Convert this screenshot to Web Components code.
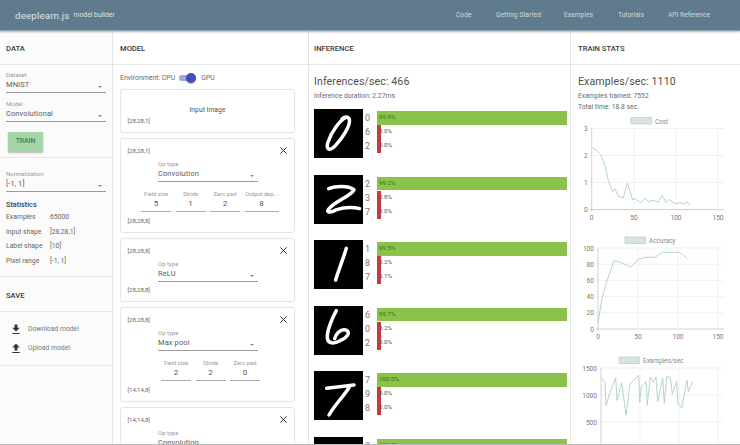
<!DOCTYPE html>
<html><head><meta charset="utf-8">
<style>
html,body{margin:0;padding:0;width:740px;height:445px;overflow:hidden;background:#fff;font-family:Roboto,"Liberation Sans",sans-serif;color:#555}
#app{display:flex;flex-direction:column;width:740px;height:445px;overflow:hidden}
#cols{display:grid;grid-template-columns:113px 196px 262px 169px;flex:1;min-height:0;border-bottom:1px solid #b9bdb9}
</style></head><body>
<div id="app">
<x-header></x-header>
<div id="cols">
<x-panel title="DATA" tint>
  <x-section pad="6px 6px 0" h="93">
    <x-select label="Dataset" value="MNIST"></x-select>
    <x-select label="Model" value="Convolutional" style="margin-top:7px"></x-select>
    <x-button style="margin:10px 0 0 2px">TRAIN</x-button>
  </x-section>
  <x-section pad="12px 6px 0" h="119" >
    <x-select label="Normalization" value="[-1, 1]"></x-select>
    <x-stats style="margin-top:8px"></x-stats>
  </x-section>
  <x-section pad="3px 0 0" h="35"><x-title>SAVE</x-title></x-section>
  <x-section pad="7.5px 0 0 12px" h="54" >
    <x-action kind="down">Download model</x-action>
    <x-action kind="up">Upload model</x-action>
  </x-section>
</x-panel>
<x-panel title="MODEL">
  <x-env></x-env>
  <x-card style="height:44px" bottom="[28,28,1]" plain>Input Image</x-card>
  <x-card style="height:95px" top="[28,28,1]" bottom="[28,28,8]" op="Convolution" fields="Field size:5,Stride:1,Zero pad:2,Output dep...:8"></x-card>
  <x-card style="height:64px" top="[28,28,8]" bottom="[28,28,8]" op="ReLU"></x-card>
  <x-card style="height:95px" top="[28,28,8]" bottom="[14,14,8]" op="Max pool" fields="Field size:2,Stride:2,Zero pad:0"></x-card>
  <x-card style="height:95px" top="[14,14,8]" bottom="" op="Convolution"></x-card>
</x-panel>
<x-panel title="INFERENCE">
  <x-heading big="Inferences/sec: 466" lines="Inference duration: 2.27ms"></x-heading>
  <x-infer digit="M97 25C80 30 52 68 41 102C36 124 50 126 64 110C86 86 110 50 106 31C103 21 90 22 84 30" labels="0,6,2" values="99.9%,0.0%,0.0%" style="margin-top:7.5px"></x-infer>
  <x-infer digit="M44 41C62 34 100 30 120 44C112 62 70 76 50 96C32 112 44 116 68 104C92 96 118 96 137 101" labels="2,3,7" values="99.2%,0.8%,0.0%"></x-infer>
  <x-infer digit="M97 25C88 55 74 90 65 120" labels="1,8,7" values="99.5%,0.2%,0.1%"></x-infer>
  <x-infer digit="M67 14C55 35 38 75 40 96C42 114 60 114 78 104C100 94 112 78 95 72C78 68 65 85 62 98" labels="6,0,2" values="99.7%,0.2%,0.0%"></x-infer>
  <x-infer digit="M38 52L70 48L120 42M105 50C85 80 60 105 45 132" labels="7,9,8" values="100.0%,0.0%,0.0%"></x-infer>
  <x-infer digit="M60 60C80 55 100 60 90 80" labels="0,6,2" values="100.0%,0.0%,0.0%"></x-infer>
</x-panel>
<x-panel title="TRAIN STATS" last>
  <x-heading big="Examples/sec: 1110" lines="Examples trained: 7552|Total time: 18.8 sec." left="7"></x-heading>
  <x-chart top="112.5" h="119.5" legend="Cost" lx="631" ly="117" x0="591.7" x1="718" xg="591.7,634,676,718" xl="0,50,100,150"
    yl="3,2,1,0" yt="128" yb="209" pts="65,440 80,450 92,462 105,495 115,540 128,575 135,565 145,588 160,592 172,548 188,598 196,595 212,607 224,593 235,603 248,600 265,604 277,584 288,606 297,597 317,610 330,606 345,611 350,603 362,614" oy="0"></x-chart>
  <x-chart top="232" h="119" legend="Accuracy" lx="625" ly="237" x0="598" x1="718" xg="598,638,678,718" xl="0,50,100,150"
    yl="100,80,60,40,20,0" yt="248" yb="329" pts="84,310 96,235 110,185 132,122 155,128 182,142 205,118 225,112 255,112 277,97 325,97 338,103 352,116" oy="220"></x-chart>
  <x-chart top="351" h="94" legend="Examples/sec" lx="619" ly="357" x0="601" x1="718" xg="601,640,679,718" xl="" yl="1500,1000,500" yt="368" yb="449" ystep="27"
    pts="94,473 105,488 108,557 122,510 137,473 141,541 155,488 168,586 180,492 206,466 209,547 214,500 229,485 232,555 241,471 250,487 258,471 263,545 278,475 283,550 290,470 301,472 307,522 320,484 324,550 335,563 351,481 355,515 368,485" oy="220"></x-chart>
</x-panel>
</div>
</div>
<script>
const def=(name,css,html,init)=>{customElements.define(name,class extends HTMLElement{
  connectedCallback(){ if(this.shadowRoot) return;
    const s=this.attachShadow({mode:'open'});
    s.innerHTML='<style>'+css+'</style>'+(typeof html==='function'?html(this):html);
    init&&init(this,s);
  }});};
const A=(e,n,d='')=>e.getAttribute(n)??d;

def('x-header',`:host{display:flex;align-items:center;height:31px;flex:none;background:#5f7b8d;color:#dde4e8;box-shadow:0 1px 2px rgba(0,0,0,.3);position:relative;z-index:2;border-bottom:1px solid #8ea2ae;box-sizing:border-box}
.logo{font-size:9.8px;margin-left:15px;letter-spacing:.12px}.sub{font-size:6.8px;margin-left:4px;margin-top:-1px}
nav{margin-left:auto;display:flex;font-size:6.7px;color:#cfd8dc}nav span{position:absolute;top:10.5px;white-space:nowrap}`,
`<div class="logo">deeplearn.js</div><div class="sub">model builder</div>
<nav><span style="left:456px">Code</span><span style="left:496px">Getting Started</span><span style="left:564px">Examples</span><span style="left:618px">Tutorials</span><span style="left:668px">API Reference</span></nav>`);

def('x-title',`:host{display:flex;align-items:center;height:100%;padding-left:6px;font-size:7.6px;font-weight:500;color:#3b3b3b}`,`<slot></slot>`);

def('x-panel',`:host{display:block;overflow:hidden;border-right:1px solid #e4e6e4;box-sizing:border-box;min-height:0}
:host([tint]){background:#fafbfa}:host([last]){border-right:0}
.h{height:34px;box-sizing:border-box;border-bottom:1px solid #e6e8e6;display:flex;align-items:center;padding-left:7px;padding-top:2px;font-size:7.6px;font-weight:500;color:#3b3b3b}`,
e=>`<div class="h">${A(e,'title')}</div><slot></slot>`,
(e,s)=>{const p=A(e,'title');const h=s.querySelector('.h');
  if(p==='DATA')h.style.paddingLeft='6px';
  if(p==='INFERENCE')h.style.paddingLeft='5px';}
);

def('x-section',`:host{display:block;box-sizing:border-box;border-bottom:1px solid #e6e8e6}`,`<slot></slot>`,(e)=>{
  e.style.padding=A(e,'pad');e.style.height=A(e,'h')+'px';});

def('x-select',`:host{display:block;position:relative;width:100px}
.l{font-size:6px;color:#9a9a9a;line-height:8px;height:8px}
.v{font-size:7.5px;color:#5a5a5a;line-height:12px;letter-spacing:.1px;white-space:nowrap}
.u{border-top:1px solid #9c9c9c;margin-top:1px;height:0}
.a{position:absolute;right:4px;bottom:5px;width:0;height:0;border:2.2px solid transparent;border-top:2.6px solid #8a8a8a;border-bottom:0}`,
e=>`<div class="l">${A(e,'label')}</div><div class="v">${A(e,'value')}</div><div class="u"></div><div class="a"></div>`);

def('x-button',`:host{display:block;width:35px;height:20px;background:#a5d6a7;color:#3c7a4a;font-size:6.8px;font-weight:500;text-align:center;line-height:19px;box-shadow:0 1px 2px rgba(0,0,0,.28);border-radius:1px}`,`<slot></slot>`);

def('x-stats',`:host{display:block;font-size:6.8px;color:#666}
b{display:block;font-weight:500;color:#444;font-size:7.3px;line-height:10px}
.r{display:grid;grid-template-columns:44px 1fr;height:14.6px;align-items:center}`,
`<b>Statistics</b><div class="r"><span>Examples</span><span>65000</span></div><div class="r"><span>Input shape</span><span>[28,28,1]</span></div><div class="r"><span>Label shape</span><span>[10]</span></div><div class="r"><span>Pixel range</span><span>[-1, 1]</span></div>`);

def('x-action',`:host{display:flex;align-items:center;height:19.3px;gap:8px;font-size:6.8px;color:#777}svg{width:8px;height:11px;flex:none}`,
e=>`<svg viewBox="0 0 8 11"><path fill="#333" d="${A(e,'kind')==='down'?'M2.6 0.5H5.4V3.7H7.7L4 7.6L0.3 3.7H2.6ZM0.3 9H7.7V10H0.3Z':'M2.6 7.6H5.4V4.4H7.7L4 0.5L0.3 4.4H2.6ZM0.3 9H7.7V10H0.3Z'}"/></svg><slot></slot>`);

def('x-env',`:host{display:flex;align-items:center;height:24px;padding-left:7px;font-size:6.9px;color:#666;box-sizing:border-box;padding-top:2px}
.t{width:17px;height:6px;border-radius:3px;background:#9fa8da;margin:0 5px 0 4px;position:relative}
.t i{position:absolute;right:0;top:-2px;width:10px;height:10px;border-radius:50%;background:#3f51b5;box-shadow:0 1px 1px rgba(0,0,0,.3)}`,
`<span>Environment: CPU</span><span class="t"><i></i></span><span>GPU</span>`);

def('x-card',`:host{display:block;position:relative;box-sizing:border-box;width:175px;margin:0 0 5px 7px;border:1px solid #e5e7e5;border-radius:3px;background:#fff;box-shadow:0 0 2px rgba(0,0,0,.06);font-size:6px;color:#666}
.t,.b{position:absolute;left:6.5px;white-space:nowrap}
.t{top:7.5px}.b{bottom:8.5px}
.x{position:absolute;right:7px;top:8px;width:7px;height:7px}
.s{position:absolute;left:37px;top:21px}
.f{position:absolute;top:51px;left:20px;display:flex;gap:4.5px}
.f div{width:30px;text-align:center}
.f u{display:block;text-decoration:none;font-size:5.8px;color:#9a9a9a;line-height:8px;white-space:nowrap}
.f span{display:block;font-size:8px;color:#555;line-height:10px;border-bottom:1px solid #aaa;height:12px;margin-top:1px}
.c{position:absolute;left:0;right:0;top:16px;text-align:center;font-size:6.8px;color:#555}`,
e=>{
 if(e.hasAttribute('plain'))return `<div class="c"><slot></slot></div><div class="b">${A(e,'bottom')}</div>`;
 const fs=A(e,'fields');const items=fs?fs.split(','):[];
 const f=items.length?`<div class="f" style="${items.length===3?'left:40px':''}">${items.map((x,i)=>{const[a,b]=x.split(':');return `<div ${i===3?'style="width:34px"':''}><u>${a}</u><span>${b}</span></div>`}).join('')}</div>`:'';
 return `<div class="t">${A(e,'top')}</div><svg class="x" viewBox="0 0 7 7"><path d="M.4.4L6.6 6.6M6.6.4L.4 6.6" stroke="#333" stroke-width="1"/></svg><x-select class="s" label="Op type" value="${A(e,'op')}"></x-select>${f}<div class="b">${A(e,'bottom')}</div>`;
});

def('x-heading',`:host{display:block;padding:8.5px 0 0 5px;color:#555}
.b{font-size:10.6px;line-height:15px;letter-spacing:.1px;color:#505050;margin-bottom:2px}.l{font-size:6.8px;line-height:11px;color:#6a6a6a}`,
e=>`<div class="b">${A(e,'big')}</div>${A(e,'lines').split('|').map(x=>`<div class="l">${x}</div>`).join('')}`,
(e)=>{if(e.hasAttribute('left'))e.style.paddingLeft=A(e,'left')+'px';});

def('x-infer',`:host{display:grid;grid-template-columns:49px 1fr;column-gap:2px;height:49px;padding-left:5px;margin-bottom:16.5px;width:253px}
svg.d{width:49px;height:49px;background:#000;display:block}
.rows{padding-top:2px;display:grid;grid-template-rows:repeat(3,14.1px)}
.r{display:grid;grid-template-columns:12px 1fr;align-items:center;font-size:9px;color:#777}
.bar{position:relative;height:13.8px;font-size:6.2px;line-height:13.8px}
.bar i{position:absolute;left:0;top:0;bottom:0;display:block}
.bar span{position:absolute;left:2px;top:0;color:#555;white-space:nowrap}`,
e=>{const L=A(e,'labels').split(','),V=A(e,'values').split(',');
return `<svg class="d" viewBox="0 0 147 147"><defs><filter id="f"><feGaussianBlur stdDeviation="2"/></filter></defs><path d="${A(e,'digit')}" fill="none" stroke="#fff" stroke-width="10.5" stroke-linecap="round" stroke-linejoin="round" filter="url(#f)"/></svg>
<div class="rows">${L.map((l,i)=>`<div class="r"><span>${l}</span><div class="bar"><i style="background:${i?'#c43c3e':'#8bc34a'};width:${i?'4px':'190px'}"></i><span style="${i?'':'color:#3f6b1e'}">${V[i]}</span></div></div>`).join('')}</div>`;});

def('x-chart',`:host{display:block;overflow:hidden}svg{display:block;font-family:Roboto,"Liberation Sans",sans-serif}`,
e=>{
 const top=+A(e,'top'),h=+A(e,'h');
 const xg=A(e,'xg').split(',').map(Number),xl=A(e,'xl')?A(e,'xl').split(','):[];
 const yl=A(e,'yl').split(','),yt=+A(e,'yt'),yb=+A(e,'yb');
 const step=A(e,'ystep')?+A(e,'ystep'):(yb-yt)/(yl.length-1);
 const x0=+A(e,'x0'),lx=+A(e,'lx'),ly=+A(e,'ly'),oy=+A(e,'oy');
 let o='';
 const n=A(e,'ystep')?4:yl.length;
 for(let i=0;i<n;i++){const y=yt+i*step;o+=`<path d="M${x0-2} ${y}H724" stroke="${i==n-1?'#c4c8c4':'#eceeec'}" stroke-width=".8"/>`;if(yl[i])o+=`<text x="${x0-4}" y="${y+2.6}" text-anchor="end" font-size="6.6" fill="#777">${yl[i]}</text>`;}
 xg.forEach((x,i)=>{o+=`<path d="M${x} ${yt}V${yb+2}" stroke="${i?'#eceeec':'#c4c8c4'}" stroke-width=".8"/>`;if(xl[i])o+=`<text x="${x}" y="${yb+10}" text-anchor="middle" font-size="6.6" fill="#777">${xl[i]}</text>`;});
 o+=`<rect x="${lx}" y="${ly}" width="20.5" height="6.5" fill="#d8e4e1" stroke="#b9cbc7" stroke-width=".7"/><text x="${lx+24}" y="${ly+6}" font-size="6.4" fill="#888">${A(e,'legend')}</text>`;
 const p=A(e,'pts').split(' ').map(s=>{const[a,b]=s.split(',').map(Number);return (570+a/3).toFixed(1)+','+(oy+b/3).toFixed(1)}).join(' ');
 o+=`<polyline points="${p}" fill="none" stroke="#a9d0c9" stroke-width=".9"/>`;
 return `<svg width="169" height="${h}" viewBox="571 ${top} 169 ${h}">${o}</svg>`;
});
</script>
</body></html>
